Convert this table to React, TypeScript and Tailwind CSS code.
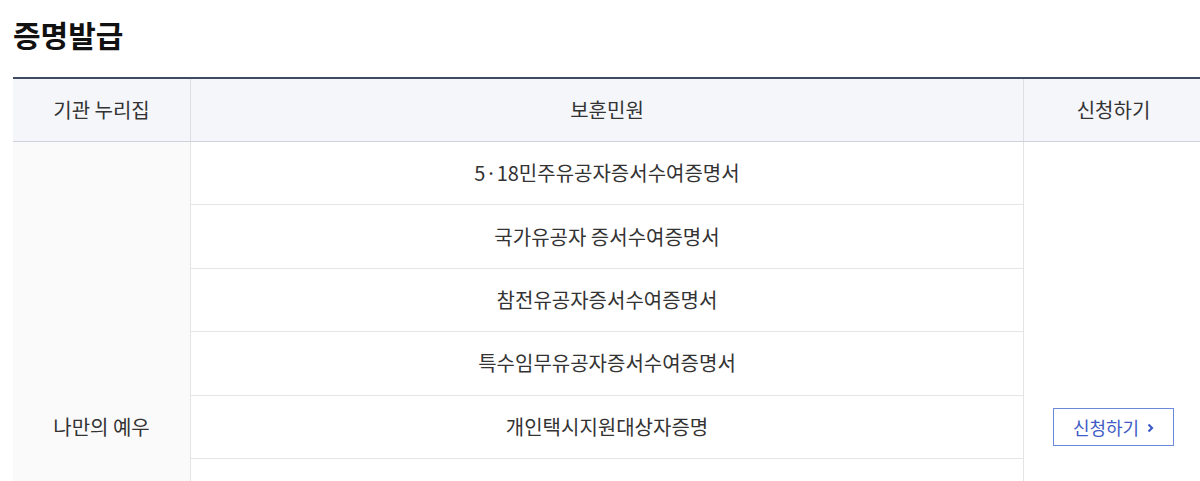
const items = [
  "5·18민주유공자증서수여증명서",
  "국가유공자 증서수여증명서",
  "참전유공자증서수여증명서",
  "특수임무유공자증서수여증명서",
  "개인택시지원대상자증명",
  "",
  "",
  "",
  "",
];

export default function App() {
  return (
    <div
      className="h-[481px] bg-white text-[#333] overflow-hidden"
      style={{ fontFamily: '"Noto Sans CJK KR", "Noto Sans", sans-serif' }}
    >
      <div className="pl-[13px]">
        <h2 className="pt-[14px] text-[30px] font-bold leading-[40px] text-[#111]">
          증명발급
        </h2>

        <div className="mt-[23px] border-t-2 border-[#414a63] w-[1190px]">
          <div className="flex h-[63px] bg-[#f4f6fa] border-b border-[#cfd2db] text-[20px]">
            <div className="w-[178px] flex items-center justify-center border-r border-[#dcdee5]">
              기관 누리집
            </div>
            <div className="w-[833px] flex items-center justify-center border-r border-[#dcdee5]">
              보훈민원
            </div>
            <div className="flex-1 flex items-center justify-center">신청하기</div>
          </div>

          <div className="flex">
            <div className="w-[178px] flex items-center justify-center bg-[#fafafa] border-r border-[#e3e4e8] text-[20px]">
              나만의 예우
            </div>
            <div className="w-[833px] border-r border-[#e3e4e8]">
              {items.map((t, i) => (
                <div
                  key={i}
                  className="h-[63.4px] flex items-center justify-center border-b border-[#e6e6e6] text-[20px]"
                >
                  {t}
                </div>
              ))}
            </div>
            <div className="flex-1 flex items-center justify-center">
              <button className="w-[121px] h-[38px] flex items-center justify-center gap-[8px] border border-[#6b88d9] text-[#3f5cc4] text-[18px]">
                신청하기
                <svg width="7" height="10" viewBox="0 0 7 10" className="mt-px">
                  <path d="M1.5 1.5L5 5L1.5 8.5" fill="none" stroke="currentColor" strokeWidth="2.2" />
                </svg>
              </button>
            </div>
          </div>
        </div>
      </div>
    </div>
  );
}
